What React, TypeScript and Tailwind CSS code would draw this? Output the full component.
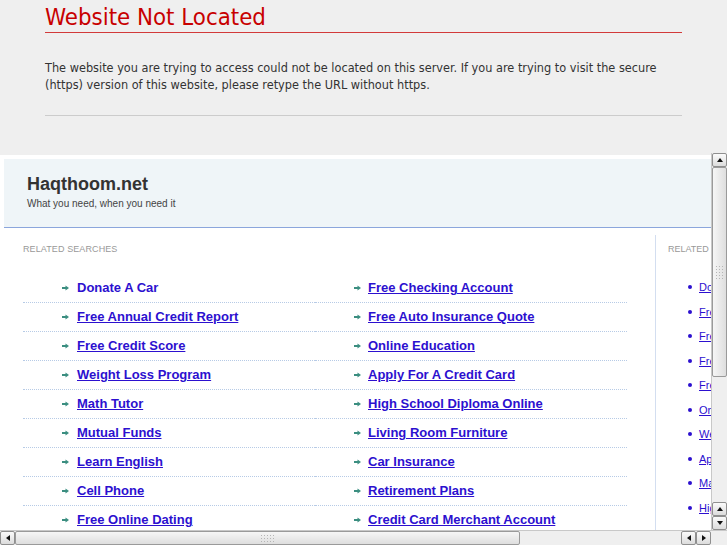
import React from "react";

const left = [
  "Donate A Car",
  "Free Annual Credit Report",
  "Free Credit Score",
  "Weight Loss Program",
  "Math Tutor",
  "Mutual Funds",
  "Learn English",
  "Cell Phone",
  "Free Online Dating",
];
const right = [
  "Free Checking Account",
  "Free Auto Insurance Quote",
  "Online Education",
  "Apply For A Credit Card",
  "High School Diploma Online",
  "Living Room Furniture",
  "Car Insurance",
  "Retirement Plans",
  "Credit Card Merchant Account",
];
const side = [
  "Donate A Car",
  "Free Annual Credit Report",
  "Free Credit Score",
  "Free Checking Account",
  "Free Auto Insurance Quote",
  "Online Education",
  "Weight Loss Program",
  "Apply For A Credit Card",
  "Math Tutor",
  "High School Diploma Online",
];

function Arrow() {
  return (
    <svg width="7" height="6" viewBox="0 0 7 6" className="shrink-0">
      <path d="M0 3h4" stroke="#3b8e80" strokeWidth="2" />
      <path d="M3.5 0.5L7 3L3.5 5.5Z" fill="#3b8e80" />
    </svg>
  );
}

function Tri({ dir }: { dir: "up" | "down" | "left" | "right" }) {
  const d = {
    up: "M1 6L4 2L7 6Z",
    down: "M1 2L4 6L7 2Z",
    left: "M6 1L2 4L6 7Z",
    right: "M2 1L6 4L2 7Z",
  }[dir];
  return (
    <svg width="8" height="8" viewBox="0 0 8 8">
      <path d={d} fill="#111" />
    </svg>
  );
}

function Btn({ dir }: { dir: "up" | "down" | "left" | "right" }) {
  return (
    <div className="w-[15px] h-[14px] flex items-center justify-center border border-[#8f8f8f] rounded-[2px] bg-gradient-to-b from-[#fbfbfb] to-[#dcdcdc] shrink-0">
      <Tri dir={dir} />
    </div>
  );
}

function Grip({ vertical }: { vertical?: boolean }) {
  return (
    <div
      className={
        vertical
          ? "grid grid-cols-3 gap-[2px]"
          : "grid grid-cols-5 gap-[2px]"
      }
    >
      {Array.from({ length: 15 }).map((_, i) => (
        <div key={i} className="w-[1px] h-[1px] bg-[#b5b5b5]" />
      ))}
    </div>
  );
}

export default function App() {
  return (
    <div
      className="w-[727px] h-[545px] overflow-hidden bg-[#efefef]"
      style={{ fontFamily: "'Liberation Sans', Arial, sans-serif" }}
    >
      <div
        className="h-[155px] px-[45px]"
        style={{ fontFamily: "'DejaVu Sans Condensed', 'DejaVu Sans', sans-serif" }}
      >
        <h1 className="pt-[4px] text-[23.8px] leading-[26px] text-[#c80000] border-b border-[#d23a3a] pb-[2px]">
          Website Not Located
        </h1>
        <p className="mt-[26px] text-[12.6px] leading-[17px] text-[#333]">
          The website you are trying to access could not be located on this server. If you are trying to visit the secure (https) version of this website, please retype the URL without https.
        </p>
        <div className="mt-[22px] border-t border-[#cccccc]" />
      </div>

      <div className="h-[390px] bg-white flex flex-col">
        <div className="flex flex-1 min-h-0">
          <div className="flex-1 overflow-hidden pt-[4px] pl-[4px]">
            <div className="w-[760px]">
              <div className="h-[69px] bg-[#eff5f8] border-b border-[#8ba6dc] pl-[23px] pt-[14px]">
                <div className="text-[18px] leading-[22px] font-bold text-[#333]">Haqthoom.net</div>
                <div className="mt-[3px] text-[10px] leading-[12px] text-[#444]">
                  What you need, when you need it
                </div>
              </div>
              <div className="flex">
                <div className="w-[651px] shrink-0 pl-[19px] pt-[15px]">
                  <div className="text-[9px] leading-[12px] text-[#999] tracking-[0.1px]">RELATED SEARCHES</div>
                  <div className="mt-[19px] w-[604px] grid grid-cols-[292px_312px]">
                    {left.map((l, i) => (
                      <React.Fragment key={l}>
                        <div className="h-[29px] border-b border-dotted border-[#b7cbe6] flex items-center pl-[39px] gap-[8px]">
                          <Arrow />
                          <a
                            className={
                              "text-[13px] font-bold text-[#2c10cf] " +
                              (i === 0 ? "" : "underline")
                            }
                          >
                            {l}
                          </a>
                        </div>
                        <div className="h-[29px] border-b border-dotted border-[#b7cbe6] flex items-center pl-[39px] gap-[7px]">
                          <Arrow />
                          <a className="text-[13px] font-bold text-[#2c10cf] underline">{right[i]}</a>
                        </div>
                      </React.Fragment>
                    ))}
                  </div>
                </div>
                <div className="mt-[7px] border-l border-[#d3def0] flex-1 pl-[12px] pt-[8px] whitespace-nowrap">
                  <div className="text-[9px] leading-[12px] text-[#999]">RELATED SEARCHES</div>
                  <div className="mt-[20px] flex flex-col">
                    {side.map((s) => (
                      <div key={s} className="h-[24.5px] flex items-center pl-[20px] gap-[7px]">
                        <div className="w-[4px] h-[4px] rounded-full bg-[#2c10cf] shrink-0" />
                        <a className="text-[11px] text-[#2c10cf] underline">{s}</a>
                      </div>
                    ))}
                  </div>
                </div>
              </div>
            </div>
          </div>
          <div className="w-[16px] -mt-[2px] flex flex-col items-center bg-[#efefef] border-l border-[#c8c8c8]">
            <Btn dir="up" />
            <div className="w-[15px] h-[210px] border border-[#9a9a9a] rounded-[2px] bg-gradient-to-r from-[#f6f6f6] to-[#dedede] flex items-center justify-center">
              <Grip vertical />
            </div>
            <div className="flex-1" />
            <Btn dir="up" />
            <Btn dir="down" />
          </div>
        </div>
        <div className="h-[15px] flex bg-[#efefef] border-t border-[#c8c8c8]">
          <Btn dir="left" />
          <div className="w-[505px] h-[14px] border border-[#9a9a9a] rounded-[2px] bg-gradient-to-b from-[#f6f6f6] to-[#dedede] flex items-center justify-center">
            <Grip />
          </div>
          <div className="flex-1" />
          <Btn dir="left" />
          <Btn dir="right" />
          <div className="w-[16px]" />
        </div>
      </div>
    </div>
  );
}
